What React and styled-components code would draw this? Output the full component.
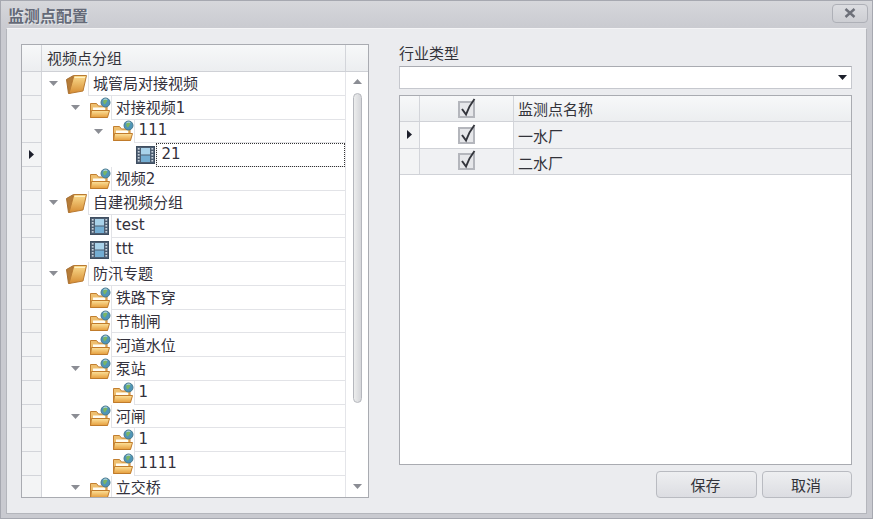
import React from "react";
import styled, { createGlobalStyle } from "styled-components";

const GlobalStyle = createGlobalStyle`
  html, body {
    margin: 0;
    padding: 0;
    width: 100%;
    height: 100%;
    overflow: hidden;
    background: #cfd0d5;
  }
  #root {
    height: 100%;
  }
`;

const Win = styled.div`
  box-sizing: border-box;
  width: 873px;
  height: 519px;
  display: flex;
  flex-direction: column;
  padding: 0 5px 4px 5px;
  background: linear-gradient(#d6d7db, #c9cad0 28px);
  border: 1px solid #a6a8b0;
  font-family: "DejaVu Sans", "Noto Sans CJK SC", sans-serif;
  font-size: 14px;
  color: #33333a;
`;
const TitleBar = styled.div`
  height: 27px;
  flex: none;
  display: flex;
  align-items: center;
  justify-content: space-between;
  padding-left: 2px;
`;
const Title = styled.span`
  font-family: "Noto Sans CJK SC", sans-serif;
  font-size: 16px;
  font-weight: 700;
  color: #656a78;
  text-shadow: 1px 1px 1px #eceded;
`;
const CloseButton = styled.div`
  box-sizing: border-box;
  width: 36px;
  height: 19px;
  margin-bottom: 3px;
  margin-right: -1px;
  display: flex;
  align-items: center;
  justify-content: center;
  border: 1px solid #aeb0b7;
  border-radius: 4px;
  background: linear-gradient(#dcdde1, #cdced3);
`;
const Body = styled.div`
  flex: 1;
  min-height: 0;
  display: flex;
  gap: 30px;
  padding: 15px 14px 15px 14px;
  background: #ebecef;
  border: 1px solid #b4b6bc;
  border-top-color: #f4f4f6;
`;
const TreePanel = styled.div`
  box-sizing: border-box;
  width: 348px;
  flex: none;
  display: flex;
  flex-direction: column;
  border: 1px solid #a9abb1;
  background: #fff;
  overflow: hidden;
`;
const HeaderRow = styled.div`
  display: flex;
  flex: none;
  height: 26px;
  border-bottom: 1px solid #cfd1d6;
  background: linear-gradient(#f7f8f9, #eceef0);
`;
const HeaderCorner = styled.div`
  width: 19px;
  flex: none;
  border-right: 1px solid #d3d5da;
`;
const HeaderCell = styled.div`
  flex: 1;
  display: flex;
  align-items: center;
  padding: 0 0 2px 5px;
  border-right: 1px solid #d3d5da;
  font-size: 15px;
`;
const HeaderEnd = styled.div`
  width: 22px;
  flex: none;
`;
const TreeBody = styled.div`
  flex: 1;
  min-height: 0;
  display: flex;
`;
const Rows = styled.div`
  flex: 1;
  min-width: 0;
  overflow: hidden;
  border-right: 1px solid #e4e5e9;
`;
const TreeRowBox = styled.div`
  box-sizing: border-box;
  height: 23.75px;
  display: flex;
`;
const Indicator = styled.div`
  box-sizing: border-box;
  width: 20px;
  flex: none;
  display: flex;
  align-items: center;
  justify-content: center;
  background: #f3f4f5;
  border-right: 1px solid #d3d5da;
  border-bottom: 1px solid #d3d5da;
`;
const Gutter = styled.div`
  flex: none;
  width: ${(p) => 46 + p.$level * 22.8}px;
  display: flex;
  align-items: center;
  justify-content: flex-end;
`;
const ArrowSlot = styled.div`
  flex: none;
  width: 26px;
  height: 100%;
  display: flex;
  align-items: center;
  justify-content: center;
`;
const IconSlot = styled.div`
  flex: none;
  width: 22px;
  height: 100%;
  display: flex;
  align-items: center;
  justify-content: center;
`;
const NodeCell = styled.div`
  box-sizing: border-box;
  flex: 1;
  min-width: 0;
  display: flex;
  align-items: center;
  padding-left: 4px;
  padding-bottom: 1px;
  font-size: 15px;
  color: #33313c;
  border-left: 1px solid #e2e3e7;
  border-bottom: 1px solid #e2e3e7;
  outline: ${(p) => (p.$focus ? "1px dotted #333" : "none")};
  outline-offset: -1px;
`;
const ScrollColumn = styled.div`
  width: 22px;
  flex: none;
  display: flex;
  flex-direction: column;
  align-items: center;
  padding-top: 7px;
`;
const ScrollThumb = styled.div`
  box-sizing: border-box;
  width: 9px;
  height: 310px;
  margin-top: 9px;
  border: 1px solid #b5b7bd;
  border-radius: 5px;
  background: linear-gradient(90deg, #eceded, #d5d6da);
`;
const ScrollGap = styled.div`
  flex: 1;
`;
const ScrollDown = styled.div`
  margin-bottom: 8px;
  line-height: 0;
`;
const RightPanel = styled.div`
  flex: 1;
  min-width: 0;
  display: flex;
  flex-direction: column;
`;
const FieldLabel = styled.div`
  height: 22px;
  flex: none;
  font-size: 15px;
  line-height: 20px;
`;
const Combo = styled.div`
  box-sizing: border-box;
  height: 23px;
  flex: none;
  display: flex;
  align-items: center;
  justify-content: flex-end;
  padding-right: 4px;
  background: #fff;
  border: 1px solid #c6c8ce;
  border-top-color: #a9abb1;
`;
const Grid = styled.div`
  box-sizing: border-box;
  flex: 1;
  min-height: 0;
  margin-top: 6px;
  background: #fff;
  border: 1px solid #a9abb1;
`;
const GridRow = styled.div`
  box-sizing: border-box;
  height: ${(p) => (p.$head ? 26 : 26.5)}px;
  display: grid;
  grid-template-columns: 20px 94px 1fr;
  background: ${(p) => (p.$head ? "linear-gradient(#f7f8f9, #eceef0)" : p.$alt ? "#f0f1f3" : "transparent")};
  border-bottom: 1px solid #d0d2d7;
`;
const GridIndicator = styled.div`
  display: flex;
  align-items: center;
  justify-content: center;
  background: ${(p) => (p.$head ? "transparent" : "#f3f4f5")};
  border-right: 1px solid #d3d5da;
`;
const CheckCell = styled.div`
  display: flex;
  align-items: center;
  justify-content: center;
  padding-bottom: 2px;
  background: ${(p) => (p.$white ? "#fff" : "transparent")};
  border-right: 1px solid #d3d5da;
`;
const NameCell = styled.div`
  display: flex;
  align-items: center;
  padding-left: 4px;
  padding-top: ${(p) => (p.$head ? 0 : 2)}px;
  font-size: 15px;
  background: ${(p) => (p.$tint ? "#f0f1f3" : "transparent")};
`;
const ButtonRow = styled.div`
  flex: none;
  display: flex;
  justify-content: flex-end;
  gap: 5px;
  margin-top: 6px;
`;
const Button = styled.div`
  box-sizing: border-box;
  width: ${(p) => p.$width}px;
  height: 27px;
  display: flex;
  align-items: center;
  justify-content: center;
  padding-right: 2px;
  font-size: 15px;
  border: 1px solid #b9bbc1;
  border-radius: 4px;
  background: linear-gradient(#eeeff1, #dcdde2);
`;

function FolderIcon() {
  return (
    <svg width="22" height="22" viewBox="0 0 22 22">
      <defs>
        <linearGradient id="fb" x1="0" y1="0" x2="0" y2="1">
          <stop offset="0" stopColor="#fde39c" />
          <stop offset="1" stopColor="#e59d3c" />
        </linearGradient>
      </defs>
      <path d="M1.500 20.500V6.500h6l2 2.500h8.500v11.500z" fill="#eebf6f" stroke="#c27f30" />
      <rect x="4" y="10.500" width="12" height="5" fill="#fffdf4" />
      <path d="M1.500 20.500l1-7h18l-2 7z" fill="url(#fb)" stroke="#c07b2b" />
      <circle cx="16.500" cy="5.500" r="4.500" fill="#4f95b8" stroke="#47788c" />
      <path d="M14 4.500c1-2 3-2.500 4-1.500s-.5 1.800-1 3-1.500 1.800-2.200.8z" fill="#79b565" />
      <path d="M14.500 2.800c1-.8 2.800-.9 3.800-.2" stroke="#d4e9f2" fill="none" />
    </svg>
  );
}

function RootFolderIcon() {
  return (
    <svg width="22" height="22" viewBox="0 0 22 22">
      <defs>
        <linearGradient id="rf" x1="0" y1="0" x2="0" y2="1">
          <stop offset="0" stopColor="#fbdc8e" />
          <stop offset="1" stopColor="#d68c33" />
        </linearGradient>
      </defs>
      <path d="M.5 6.500 7.500 2.500 4 20.500H2.500z" fill="#b67c38" stroke="#a56e30" />
      <path d="M3 20.500 8 2.500h12.500L17 18z" fill="url(#rf)" stroke="#b97a32" />
      <path d="M8.500 4.500h10.500" stroke="#fff0c4" />
    </svg>
  );
}

function FilmIcon() {
  return (
    <svg width="19" height="18" viewBox="0 0 19 18">
      <rect x="0.500" y="0.500" width="18" height="17" fill="#4d5e72" stroke="#3f4e60" />
      <rect x="5" y="2" width="9" height="6.500" fill="#a9d2ea" />
      <rect x="5" y="9.500" width="9" height="6.500" fill="#74add2" />
      {[2, 5, 8, 11, 14].map((y) => (
        <React.Fragment key={y}>
          <rect x="1.800" y={y} width="1.800" height="1.600" fill="#c9d2dc" />
          <rect x="15.400" y={y} width="1.800" height="1.600" fill="#c9d2dc" />
        </React.Fragment>
      ))}
    </svg>
  );
}

function Expander() {
  return (
    <svg width="9" height="5" viewBox="0 0 9 5">
      <path d="M0 0h9L4.500 5z" fill="#8b8d94" />
    </svg>
  );
}

function RowPointer() {
  return (
    <svg width="5" height="9" viewBox="0 0 5 9">
      <path d="M0 0l5 4.500L0 9z" fill="#1c1f2b" />
    </svg>
  );
}

function CheckBox() {
  return (
    <svg width="18" height="20" viewBox="0 0 18 20">
      <rect x="1" y="4" width="15" height="15" fill="#e6e7ea" stroke="#b4b6bc" strokeWidth="2" />
      <path d="M4 11l4 5.500C10 11 12.500 6 16.500 1" fill="none" stroke="#33353c" strokeWidth="2" />
    </svg>
  );
}

const treeData = [
  { level: 0, open: true, icon: "root", name: "城管局对接视频" },
  { level: 1, open: true, icon: "globe", name: "对接视频1" },
  { level: 2, open: true, icon: "globe", name: "111" },
  { level: 3, icon: "film", name: "21", current: true },
  { level: 1, icon: "globe", name: "视频2" },
  { level: 0, open: true, icon: "root", name: "自建视频分组" },
  { level: 1, icon: "film", name: "test" },
  { level: 1, icon: "film", name: "ttt" },
  { level: 0, open: true, icon: "root", name: "防汛专题" },
  { level: 1, icon: "globe", name: "铁路下穿" },
  { level: 1, icon: "globe", name: "节制闸" },
  { level: 1, icon: "globe", name: "河道水位" },
  { level: 1, open: true, icon: "globe", name: "泵站" },
  { level: 2, icon: "globe", name: "1" },
  { level: 1, open: true, icon: "globe", name: "河闸" },
  { level: 2, icon: "globe", name: "1" },
  { level: 2, icon: "globe", name: "1111" },
  { level: 1, open: true, icon: "globe", name: "立交桥" },
];

function NodeIcon({ type }) {
  if (type === "root") return <RootFolderIcon />;
  if (type === "film") return <FilmIcon />;
  return <FolderIcon />;
}

function TreeRow({ item }) {
  return (
    <TreeRowBox>
      <Indicator>{item.current && <RowPointer />}</Indicator>
      <Gutter $level={item.level}>
        <ArrowSlot>{item.open && <Expander />}</ArrowSlot>
        <IconSlot>
          <NodeIcon type={item.icon} />
        </IconSlot>
      </Gutter>
      <NodeCell $focus={item.current}>{item.name}</NodeCell>
    </TreeRowBox>
  );
}

export default function App() {
  return (
    <>
      <GlobalStyle />
      <Win>
        <TitleBar>
          <Title>监测点配置</Title>
          <CloseButton>
            <svg width="12" height="10" viewBox="0 0 12 10">
              <path d="M1.500 1l9 8M10.500 1l-9 8" stroke="#6d7079" strokeWidth="2.400" />
            </svg>
          </CloseButton>
        </TitleBar>
        <Body>
          <TreePanel>
            <HeaderRow>
              <HeaderCorner />
              <HeaderCell>视频点分组</HeaderCell>
              <HeaderEnd />
            </HeaderRow>
            <TreeBody>
              <Rows>
                {treeData.map((item, i) => (
                  <TreeRow key={i} item={item} />
                ))}
              </Rows>
              <ScrollColumn>
                <svg width="9" height="5" viewBox="0 0 9 5">
                  <path d="M0 5h9L4.500 0z" fill="#8b8d94" />
                </svg>
                <ScrollThumb />
                <ScrollGap />
                <ScrollDown>
                  <Expander />
                </ScrollDown>
              </ScrollColumn>
            </TreeBody>
          </TreePanel>
          <RightPanel>
            <FieldLabel>行业类型</FieldLabel>
            <Combo>
              <svg width="9" height="5" viewBox="0 0 9 5">
                <path d="M0 0h9L4.500 5z" fill="#1c1f2b" />
              </svg>
            </Combo>
            <Grid>
              <GridRow $head>
                <GridIndicator $head />
                <CheckCell>
                  <CheckBox />
                </CheckCell>
                <NameCell $head>监测点名称</NameCell>
              </GridRow>
              <GridRow>
                <GridIndicator>
                  <RowPointer />
                </GridIndicator>
                <CheckCell $white>
                  <CheckBox />
                </CheckCell>
                <NameCell $tint>一水厂</NameCell>
              </GridRow>
              <GridRow $alt>
                <GridIndicator />
                <CheckCell>
                  <CheckBox />
                </CheckCell>
                <NameCell>二水厂</NameCell>
              </GridRow>
            </Grid>
            <ButtonRow>
              <Button $width={101}>保存</Button>
              <Button $width={90}>取消</Button>
            </ButtonRow>
          </RightPanel>
        </Body>
      </Win>
    </>
  );
}
